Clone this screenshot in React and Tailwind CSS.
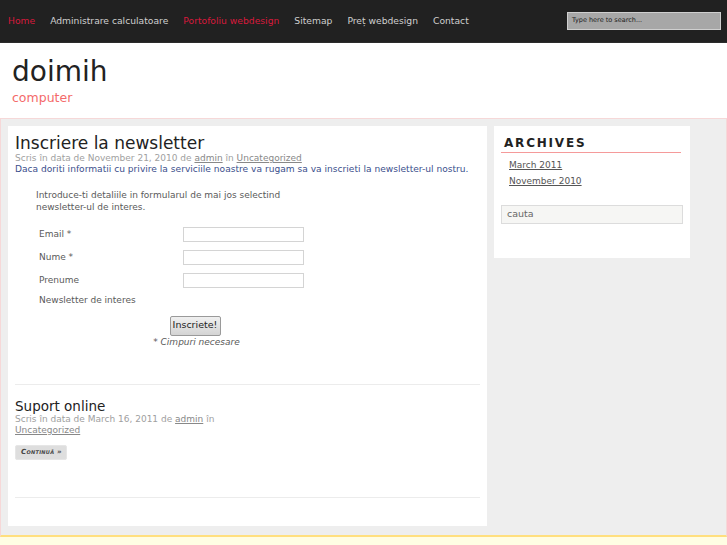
const navItems = [
  { label: 'Home', active: true },
  { label: 'Administrare calculatoare' },
  { label: 'Portofoliu webdesign', active: true },
  { label: 'Sitemap' },
  { label: 'Preț webdesign' },
  { label: 'Contact' },
]

const fields = ['Email *', 'Nume *', 'Prenume']

export default function App() {
  return (
    <div className="min-h-[545px] bg-[#fffde3] text-[#222] font-['DejaVu_Sans',sans-serif]">
      {/* Top nav */}
      <div className="h-[43px] bg-[#212121] flex items-center justify-between pl-[8px] pr-[6px] border-b border-[#2c2c2c]">
        <nav className="flex items-center gap-[15px] text-[9.2px] -mt-[1px]">
          {navItems.map((item) => (
            <a
              key={item.label}
              className={item.active ? 'text-[#d8193c]' : 'text-[#cfcfcf]'}
            >
              {item.label}
            </a>
          ))}
        </nav>
        <div className="w-[154px] h-[18px] bg-[#a7a7a7] border border-[#cfcfcf] flex items-center pl-[4px] -mt-[1px]">
          <span className="text-[6.5px] text-[#1a1a1a] font-medium">Type here to search...</span>
        </div>
      </div>

      {/* Header */}
      <header className="h-[75px] bg-white pl-[12px] pt-[12px]">
        <h1 className="text-[28px] leading-[34px] text-[#222]">doimih</h1>
        <p className="text-[12.5px] leading-[17px] text-[#f46a6a]">computer</p>
      </header>

      {/* Content */}
      <div className="bg-[#eeeeee] border-t border-l border-r border-[#f6d8d8] pl-[7px] pt-[7px] h-[419px] flex items-start gap-[7px] border-b-2 border-b-[#ffdf7e]">
        {/* Main column */}
        <main className="w-[479px] h-[400px] bg-white px-[7px] pt-[7px]">
          <h2 className="text-[17px] leading-[20px] text-[#222]">Inscriere la newsletter</h2>
          <p className="text-[9px] leading-[11px] text-[#a0a0a0]">
            Scris în data de November 21, 2010 de <a className="underline text-[#888]">admin</a> în{' '}
            <a className="underline text-[#888]">Uncategorized</a>
          </p>
          <p className="text-[9.1px] leading-[11px] text-[#3b4f8c]">
            Daca doriti informatii cu privire la serviciile noastre va rugam sa va inscrieti la newsletter-ul nostru.
          </p>

          <div className="ml-[21px] mt-[14px] w-[318px] text-[9px] text-[#5a5a5a]">
            <p className="leading-[12px] pr-[50px]">
              Introduce-ti detaliile in formularul de mai jos selectind newsletter-ul de interes.
            </p>
            <div className="mt-[10px] pl-[3px]">
              {fields.map((f) => (
                <div key={f} className="h-[23px] flex items-center">
                  <span className="w-[144px]">{f}</span>
                  <div className="w-[121px] h-[15px] border border-[#d4d4d4] bg-white" />
                </div>
              ))}
              <div className="h-[17px] flex items-center">Newsletter de interes</div>
            </div>
            <div className="flex flex-col items-center mt-[6.5px]">
              <button className="h-[20px] w-[51px] text-[9.5px] text-[#222] border border-[#9a9a9a] rounded-[2px] bg-gradient-to-b from-[#f0f0f0] to-[#d4d4d4]">
                Inscriete!
              </button>
              <p className="italic leading-[11px] mt-[1.5px] pl-[3px]">* Cimpuri necesare</p>
            </div>
          </div>

          <div className="mt-[36px] border-t border-[#ececec]" />

          <h2 className="mt-[13px] text-[13.5px] leading-[16px] text-[#222]">Suport online</h2>
          <p className="text-[9px] leading-[11px] text-[#a0a0a0]">
            Scris în data de March 16, 2011 de <a className="underline text-[#888]">admin</a> în
            <br />
            <a className="underline text-[#888]">Uncategorized</a>
          </p>
          <div className="mt-[9px] w-[52px] h-[15px] bg-[#dedede] border border-[#e6e6e6] rounded-[2px] flex items-center pl-[5px]">
            <span className="whitespace-nowrap text-[7px] font-bold italic [font-variant:small-caps] tracking-[0.3px] text-[#444]">Continuă »</span>
          </div>

          <div className="mt-[37px] border-t border-[#ececec]" />
        </main>

        {/* Sidebar */}
        <aside className="w-[196px] h-[132px] bg-white px-[7px] pt-[10px]">
          <h3 className="text-[12px] leading-[14px] font-bold tracking-[1.8px] text-[#222] pl-[3px] pb-[2px] border-b border-[#f59a9a] mr-[2px]">
            ARCHIVES
          </h3>
          <ul className="mt-[4px] pl-[8px] text-[9px] text-[#555]">
            <li className="leading-[16px]"><a className="underline">March 2011</a></li>
            <li className="leading-[16px]"><a className="underline">November 2010</a></li>
          </ul>
          <div className="mt-[16px] h-[19px] bg-[#f6f6f4] border border-[#dcdcdc] flex items-center pl-[5px]">
            <span className="text-[9.5px] text-[#666]">cauta</span>
          </div>
        </aside>
      </div>
    </div>
  )
}
